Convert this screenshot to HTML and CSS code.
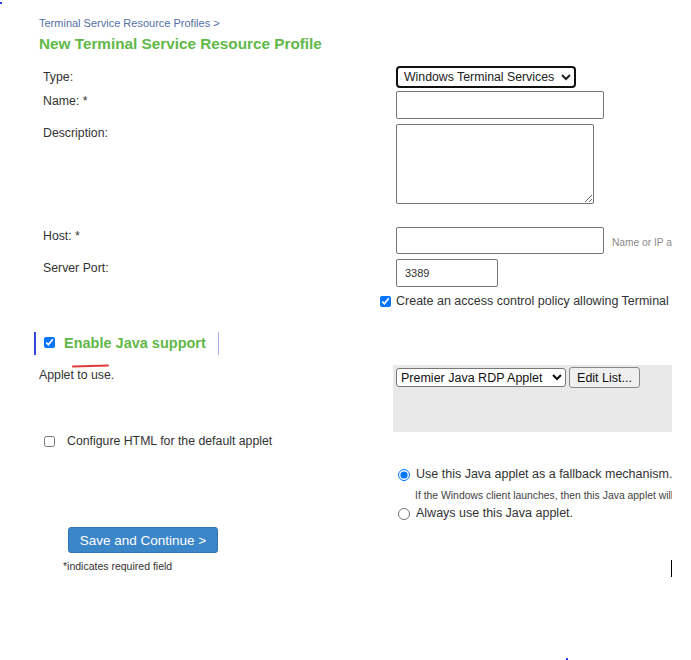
FILE: index.html
```html
<!DOCTYPE html>
<html lang="en">
<head>
<meta charset="UTF-8" />
<title>New Terminal Service Resource Profile</title>
<link rel="stylesheet" href="styles.css">
</head>
<body>
<div class="page">
  <span class="dot dot-top"></span>

  <div class="crumbs">Terminal Service Resource Profiles &gt;</div>
  <h1 class="title">New Terminal Service Resource Profile</h1>

  <div class="form">
    <label class="lbl lbl-type">Type:</label>
    <div class="ctl">
      <select class="sel-type">
        <option>Windows Terminal Services</option>
      </select>
    </div>

    <label class="lbl lbl-name">Name: *</label>
    <div class="ctl row-name"><input class="txt wide" type="text" /></div>

    <label class="lbl lbl-desc">Description:</label>
    <div class="ctl row-desc"><textarea class="area"></textarea></div>

    <label class="lbl lbl-host">Host: *</label>
    <div class="ctl row-host">
      <input class="txt wide h27" type="text" />
      <span class="hint">Name or IP address</span>
    </div>

    <label class="lbl lbl-port">Server Port:</label>
    <div class="ctl row-port"><input class="txt port" type="text" value="3389" /></div>

    <div></div>
    <div class="ctl row-policy">
      <input type="checkbox" class="chk" checked />
      <span>Create an access control policy allowing Terminal Services access</span>
    </div>
  </div>

  <div class="java">
    <input type="checkbox" class="chk" checked />
    <span class="java-text">Enable Java support</span>
  </div>

  <div class="applet">
    <div class="applet-lbl">
      Applet to use.
      <span class="scribble"></span>
    </div>
    <div class="applet-box">
      <select class="sel-applet">
        <option>Premier Java RDP Applet</option>
      </select>
      <button class="btn-edit">Edit List...</button>
    </div>
  </div>

  <div class="cfg">
    <input type="checkbox" class="chk" />
    <span>Configure HTML for the default applet</span>
  </div>

  <div class="modes">
    <div class="mode">
      <input type="radio" name="mode" class="rad" checked />
      <span>Use this Java applet as a fallback mechanism.</span>
    </div>
    <div class="mode-note">If the Windows client launches, then this Java applet will not be used.</div>
    <div class="mode">
      <input type="radio" name="mode" class="rad" />
      <span>Always use this Java applet.</span>
    </div>
  </div>

  <button class="btn-save">Save and Continue &gt;</button>
  <div class="req">*indicates required field</div>

  <span class="caret"></span>
  <span class="dot dot-bottom"></span>
</div>
</body>
</html>
```

FILE: styles.css
```css
body {
  margin: 0;
  background: #fff;
  font-family: 'Liberation Sans', Arial, sans-serif;
  font-size: 12.3px;
  color: #333;
}
.page {
  position: relative;
  width: 633px;
  height: 644px;
  overflow: hidden;
  padding: 16px 0 0 39px;
}
.dot {
  position: absolute;
  width: 2px;
  height: 2px;
  background: #2a3cff;
}
.dot-top { left: 0; top: 2px; }
.dot-bottom { left: 566px; top: 658px; }
.caret {
  position: absolute;
  left: 671px;
  top: 560px;
  width: 1px;
  height: 17px;
  background: #000;
}

.crumbs {
  font-size: 11px;
  line-height: 14px;
  color: #5470a8;
}
.title {
  margin: 4px 0 0;
  font-size: 15.3px;
  line-height: 19px;
  font-weight: bold;
  color: #5fb848;
}

/* main form grid */
.form {
  display: grid;
  grid-template-columns: 353px auto;
  margin: 13px 0 0 4px;
}
.lbl {
  line-height: 14px;
  color: #333;
}
.lbl-type { padding-top: 4px; }
.lbl-name { padding-top: 3px; margin-top: 3px; }
.lbl-desc { padding-top: 2px; margin-top: 5px; }
.lbl-host { padding-top: 2px; margin-top: 23px; }
.lbl-port { padding-top: 2px; margin-top: 5px; }
.ctl { display: flex; align-items: center; }
.row-name { margin-top: 3px; }
.row-desc { margin-top: 5px; }
.row-host { margin-top: 23px; }
.row-port { margin-top: 5px; }
.row-policy { margin: 7px 0 0 -16px; white-space: nowrap; font-size: 12.5px; }

select, input, textarea, button {
  font-family: 'Liberation Sans', Arial, sans-serif;
  box-sizing: border-box;
}
.sel-type {
  height: 22px;
  width: 180px;
  font-size: 12.3px;
  color: #222;
  border: 2px solid #111;
  border-radius: 4px;
  background: #fff;
  padding: 0 2px;
}
.txt {
  height: 28px;
  border: 1px solid #767676;
  border-radius: 2px;
  font-size: 11px;
  color: #333;
  padding: 0 8px;
  background: #fff;
}
.wide { width: 208px; }
.h27 { height: 27px; }
.port { width: 102px; }
.area {
  width: 198px;
  height: 80px;
  border: 1px solid #767676;
  border-radius: 2px;
  resize: vertical;
}
.hint {
  margin-left: 8px;
  font-size: 10.2px;
  color: #8a8a8a;
  white-space: nowrap;
  padding-top: 3px;
}
.chk {
  width: 11px;
  height: 11px;
  margin: 0 5px 0 0;
}

/* java toggle */
.java {
  display: flex;
  align-items: center;
  width: 174px;
  height: 23px;
  margin: 24px 0 0 -5px;
  padding-left: 8px;
  border-left: 2px solid #3346d8;
  border-right: 1px solid #a8b0ec;
}
.java .chk { margin: -2px 9px 0 0; }
.java-text {
  font-size: 14.5px;
  font-weight: bold;
  color: #5fb848;
  margin-top: -2px;
}

/* applet row */
.applet {
  display: grid;
  grid-template-columns: 354px auto;
  margin-top: 10px;
}
.applet-lbl {
  position: relative;
  padding-top: 3px;
  line-height: 14px;
}
.scribble {
  position: absolute;
  left: 33px;
  top: 0;
  width: 37px;
  height: 2px;
  background: #e23a3a;
  border-radius: 2px;
  transform: rotate(-2deg);
}
.applet-box {
  box-sizing: border-box;
  height: 67px;
  background: #e9e9e9;
  padding: 3px 0 0 3px;
  display: flex;
  align-items: flex-start;
  white-space: nowrap;
}
.sel-applet {
  height: 19px;
  width: 170px;
  font-size: 12.5px;
  color: #111;
  border: 1px solid #767676;
  border-radius: 3px;
  background: #fff;
  padding: 0;
}
.btn-edit {
  margin: -1px 0 0 3px;
  height: 21px;
  width: 71px;
  font-size: 12.5px;
  color: #111;
  border: 1px solid #8a8a8a;
  border-radius: 3px;
  background: #efefef;
  padding: 0;
}

.cfg {
  display: flex;
  align-items: center;
  margin: 3px 0 0 5px;
  height: 12px;
}
.cfg .chk { margin-right: 12px; }

/* radio group */
.modes {
  margin: 19px 0 0 359px;
  white-space: nowrap;
}
.mode {
  display: flex;
  align-items: center;
  height: 16px;
  font-size: 12.5px;
}
.rad {
  width: 12px;
  height: 12px;
  margin: 2px 6px 0 0;
}
.mode-note {
  font-size: 10.4px;
  color: #444;
  margin: 8px 0 0 17px;
  line-height: 11px;
}
.mode-note + .mode { margin-top: 4px; }

.btn-save {
  display: block;
  margin: 6px 0 0 29px;
  width: 150px;
  height: 26px;
  background: #3b85c9;
  color: #fff;
  font-size: 13.5px;
  border: 1px solid #2f74b5;
  border-radius: 3px;
  padding: 0;
}
.req {
  margin: 7px 0 0 24px;
  font-size: 10.5px;
  color: #333;
}
```
